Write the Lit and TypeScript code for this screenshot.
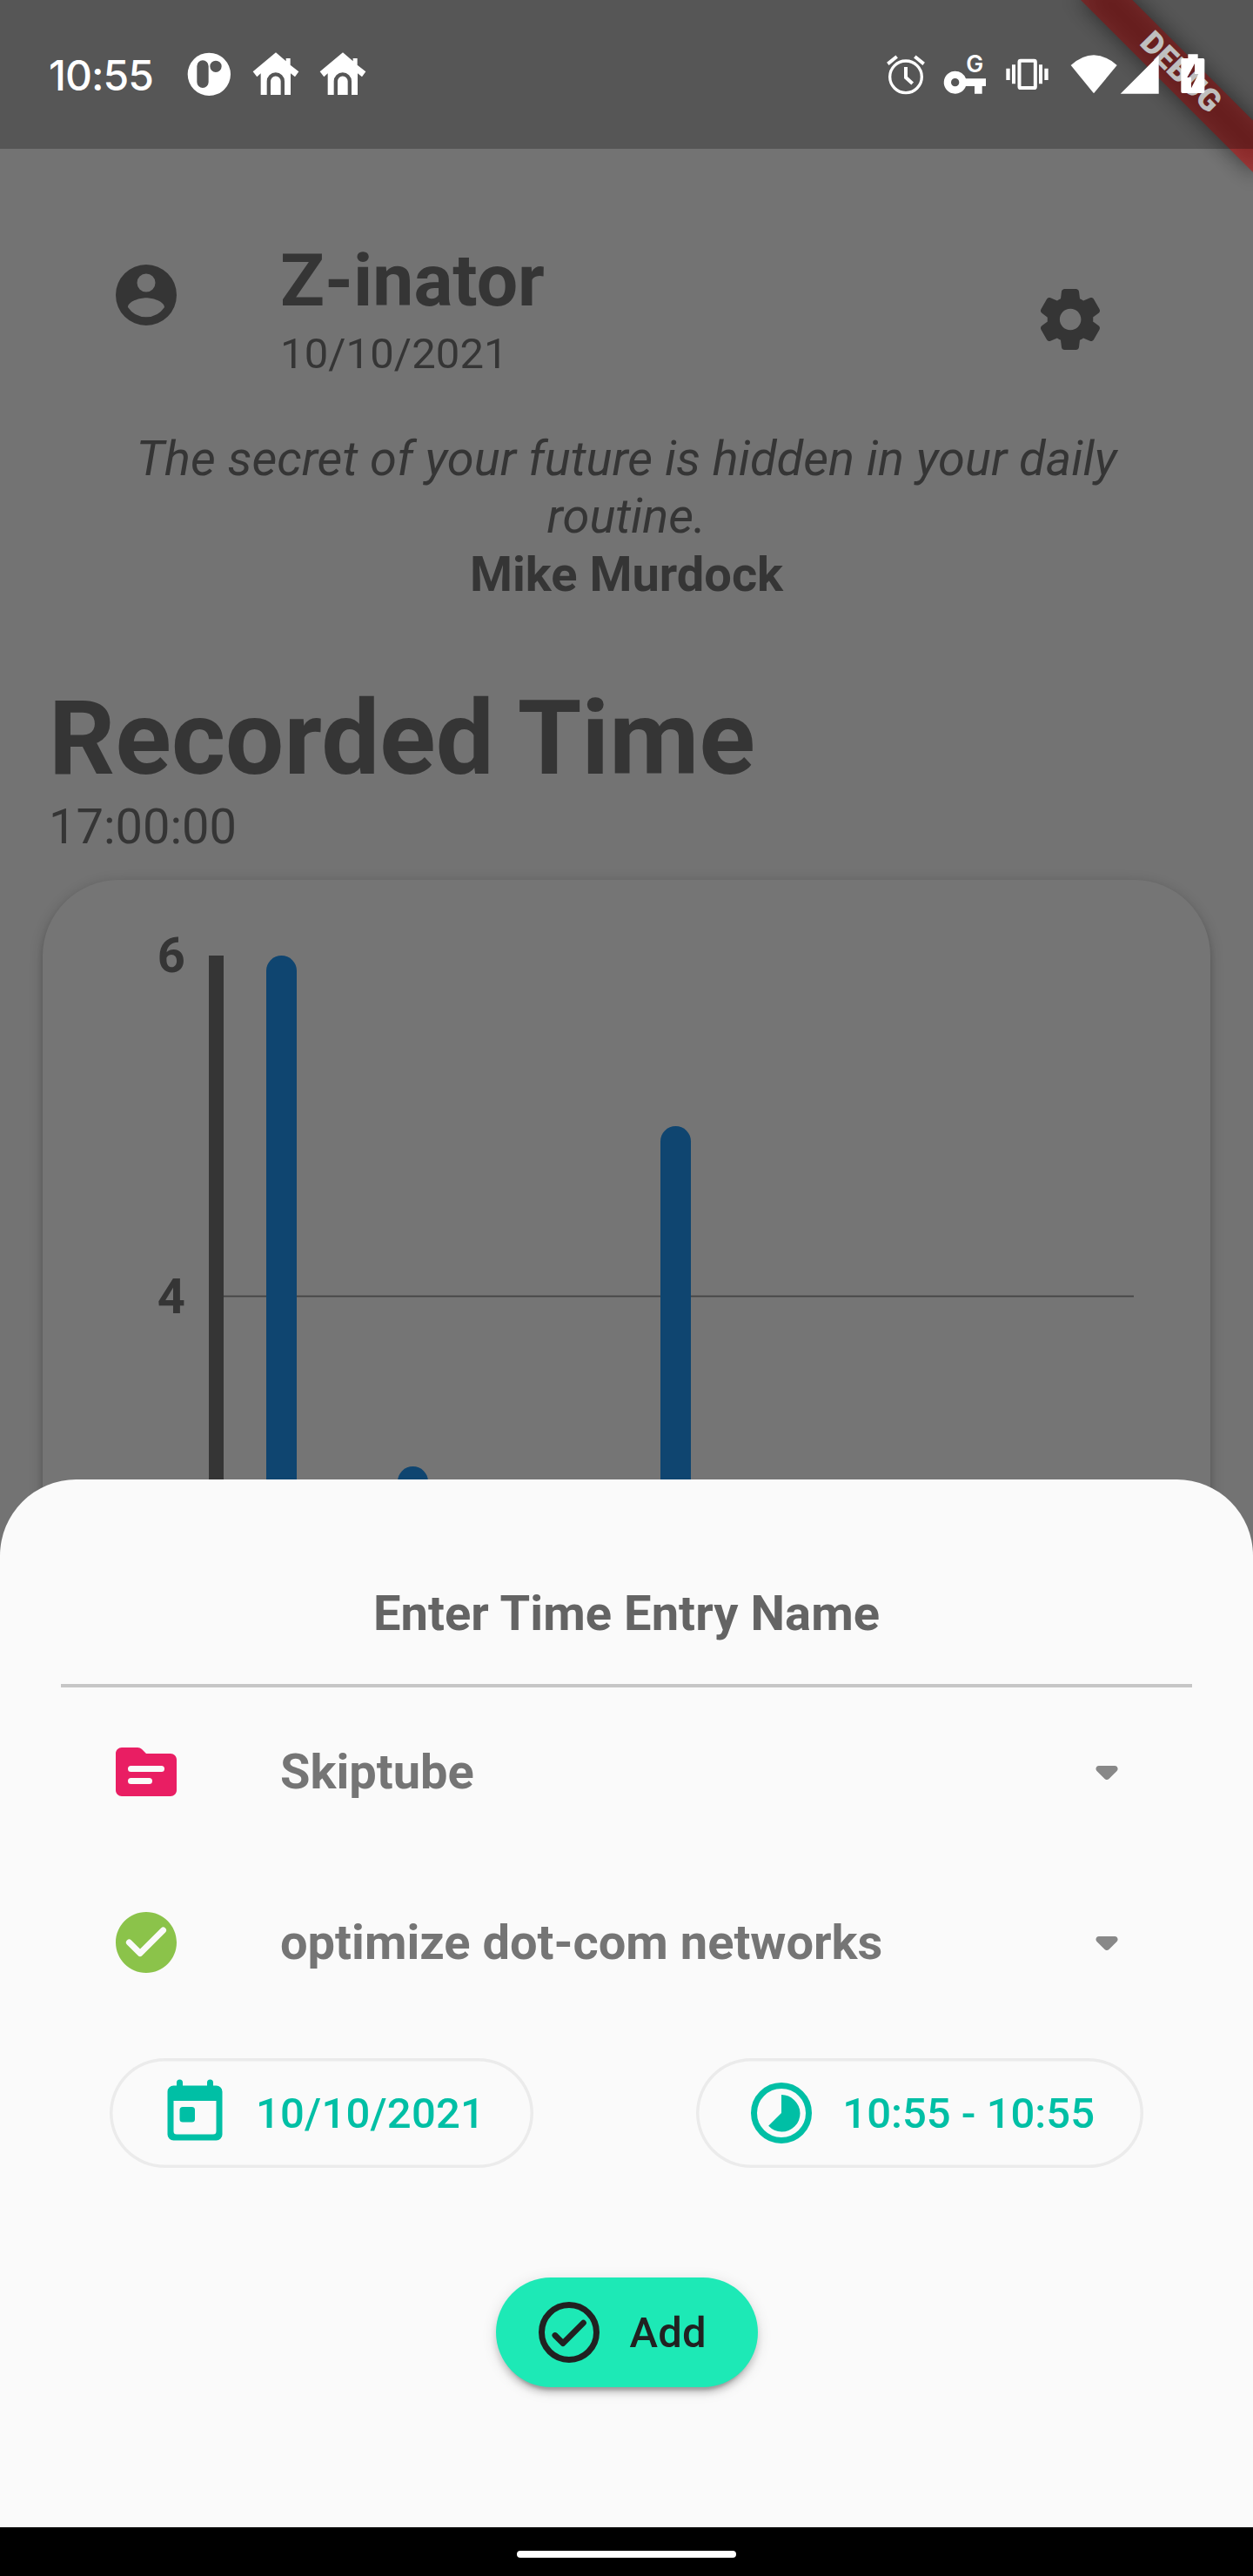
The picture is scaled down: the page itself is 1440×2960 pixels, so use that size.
import { LitElement, html, css, svg } from "lit";
import { customElement, property } from "lit/decorators.js";

const glyphs: Record<string, unknown> = {
  account: svg`<path fill-rule="evenodd" d="M12 2a10 10 0 1 0 0 20 10 10 0 0 0 0-20zm0 3a3 3 0 1 1 0 6 3 3 0 0 1 0-6zm0 14.2a7.2 7.2 0 0 1-6-3.22c.03-1.99 4-3.08 6-3.08s5.970 1.090 6 3.080a7.200 7.200 0 0 1-6 3.220z"/>`,
  settings: svg`<path d="M19.500 12c0-.23-.01-.45-.03-.68l1.860-1.410c.4-.3.510-.86.260-1.300l-1.870-3.230c-.25-.44-.79-.62-1.250-.42l-2.150.91c-.37-.26-.76-.49-1.170-.68l-.29-2.310c-.06-.5-.49-.88-.99-.88h-3.730c-.51 0-.94.380-1 .88l-.29 2.310c-.41.190-.8.420-1.170.68l-2.150-.91c-.46-.2-1-.02-1.250.42L2.410 8.620c-.25.440-.14.990.260 1.300l1.860 1.410c-.02.220-.03.440-.03.670s.01.450.030.680l-1.860 1.410c-.4.300-.51.860-.26 1.300l1.870 3.230c.25.440.79.620 1.250.42l2.150-.91c.37.260.76.490 1.170.68l.29 2.310c.06.500.49.880.99.880h3.730c.500 0 .930-.38.990-.88l.290-2.310c.410-.19.800-.42 1.170-.68l2.150.91c.460.200 1 .020 1.250-.42l1.870-3.230c.250-.44.140-.99-.26-1.300l-1.860-1.410c.030-.23.040-.45.040-.68zm-7.460 3.500c-1.930 0-3.500-1.570-3.500-3.500s1.570-3.500 3.500-3.500 3.500 1.570 3.500 3.500-1.570 3.500-3.500 3.500z"/>`,
  folder: svg`<path fill-rule="evenodd" d="M4 4h5.170c.53 0 1.040.210 1.420.590L12 6h8c1.100 0 2 .9 2 2v10c0 1.100-.9 2-2 2H4c-1.100 0-2-.9-2-2V6c0-1.100.9-2 2-2zm3 10a1 1 0 0 0 0 2h6a1 1 0 0 0 0-2zm0-4a1 1 0 0 0 0 2h10a1 1 0 0 0 0-2z"/>`,
  check: svg`<path d="M12 2C6.480 2 2 6.480 2 12s4.480 10 10 10 10-4.480 10-10S17.520 2 12 2zM9.290 16.290L5.700 12.700a.996.996 0 1 1 1.410-1.410L10 14.170l6.880-6.880a.996.996 0 1 1 1.410 1.410l-7.590 7.590a.996.996 0 0 1-1.410 0z"/>`,
  checkOutline: svg`<circle cx="12" cy="12" r="9" fill="none" stroke="currentColor" stroke-width="2"/><path d="M7.400 13L10 15.600l6.700-6.700" fill="none" stroke="currentColor" stroke-width="1.950" stroke-linecap="round" stroke-linejoin="round"/>`,
  drop: svg`<path d="M8.710 11.710l2.590 2.590c.39.390 1.020.390 1.410 0l2.590-2.590c.63-.63.180-1.710-.71-1.710H9.410c-.89 0-1.330 1.080-.7 1.710z"/>`,
  today: svg`<path fill-rule="evenodd" d="M6 3V2a1 1 0 0 1 2 0v1h8V2a1 1 0 0 1 2 0v1h1a2 2 0 0 1 2 2v14a2 2 0 0 1-2 2H5a2 2 0 0 1-2-2V5a2 2 0 0 1 2-2zM5 8v10a1 1 0 0 0 1 1h12a1 1 0 0 0 1-1V8z"/><rect x="7" y="10" width="5" height="5" rx="1"/>`,
  timelapse: svg`<circle cx="12" cy="12" r="9" fill="none" stroke="currentColor" stroke-width="2"/><path d="M16.240 7.760A6 6 0 0 0 12 6v6l-4.240 4.240a6 6 0 1 0 8.480-8.480z"/>`,
};

@customElement("m-icon")
class MIcon extends LitElement {
  static styles = css`
    :host { display: block; flex: none; width: 84px; height: 84px; }
    svg { display: block; width: 100%; height: 100%; fill: currentColor; }
  `;
  @property() name = "";
  render() {
    return html`<svg viewBox="0 0 24 24">${glyphs[this.name]}</svg>`;
  }
}

@customElement("status-bar")
class StatusBar extends LitElement {
  static styles = css`
    :host { display: flex; align-items: flex-start; box-sizing: border-box; height: 171px; padding: 60px 55px 0 56px; background: rgba(0, 0, 0, 0.25); color: #fff; }
    svg { display: block; flex: none; height: 51px; fill: currentColor; overflow: visible; }
    .time { width: 159px; font: 550 48px/54px Inter, Roboto, sans-serif; letter-spacing: -1px; }
    .left { display: flex; gap: 23px; }
    .right { display: flex; margin-left: auto; }
    .w50 { width: 52px; }
    .w54 { width: 54px; }
    .alarm { width: 46px; margin-right: 20px; }
    .key { width: 50px; margin-right: 21px; }
    .vib { width: 50px; margin-right: 25px; }
    .wifi { width: 54px; margin-right: 3px; }
    .cell { width: 45px; margin-right: 25px; }
    .bat { width: 28px; }
    .line { fill: none; stroke: currentColor; }
    .g { font: 600 80px Inter, Roboto, sans-serif; }
  `;
  private house() {
    return html`<svg class="w54" viewBox="871 180 162 153"><path d="M952 181L987 211V201H1002V224L1031 247L1018 265L1003 253V327H982V280a30.500 30.500 0 0 0-61 0V327H900V253L887 265L873 247ZM934 327V280a17.500 17.500 0 0 1 35 0V327Z"/></svg>`;
  }
  render() {
    return html`
      <div class="time">10:55</div>
      <div class="left">
        <svg class="w50" viewBox="645 180 156 153"><path fill-rule="evenodd" d="M721 182a74 74 0 1 0 0 148a74 74 0 0 0 0-148ZM699 208a20 20 0 0 1 20 20V283a20 20 0 0 1-40 0V228a20 20 0 0 1 20-20ZM744 209a20 20 0 1 1 0 40a20 20 0 0 1 0-40Z"/></svg>
        ${this.house()}${this.house()}
      </div>
      <div class="right">
        <svg class="alarm" viewBox="111 180 138 153"><g class="line"><circle cx="180" cy="265" r="55" stroke-width="10"/><path d="M180 231V267L203 288" stroke-width="12"/><path d="M118 220L149 195M211 195L242 220" stroke-width="12"/></g></svg>
        <svg class="key" viewBox="309 180 150 153"><path fill-rule="evenodd" d="M350 245a39 39 0 1 0 37 52H417V323H443V297H456V271H387A39 39 0 0 0 350 245ZM350 270a14 14 0 1 1 0 28a14 14 0 0 1 0-28Z"/><text class="g" x="388" y="248">G</text></svg>
        <svg class="vib" viewBox="522 180 150 153"><rect class="line" x="571.500" y="209" width="55" height="94" rx="4" stroke-width="12"/><path d="M526 236h13v40h-13zM546 223h12v66h-12zM639 223h12v66h-12zM658 236h13v40h-13z"/></svg>
        <svg class="wifi" viewBox="748 180 162 153"><path d="M750 225Q829 155 909 225L829 322Z"/></svg>
        <svg class="cell" viewBox="921 180 135 153"><path d="M923 323L1055 191V323Z"/></svg>
        <svg class="bat" viewBox="1130 180 84 153"><path fill-rule="evenodd" d="M1155 187H1189V201H1207a5 5 0 0 1 5 5V316a5 5 0 0 1-5 5H1136a5 5 0 0 1-5-5V206a5 5 0 0 1 5-5H1155ZM1178 219L1152 267H1166V304L1191 255H1178Z"/></svg>
      </div>`;
  }
}

const UNIT = 195.75;

@customElement("time-chart")
class TimeChart extends LitElement {
  static styles = css`
    :host { display: block; position: relative; box-sizing: border-box; height: 1400px; border-radius: 87.5px; background: #fff; color: #757575;
      box-shadow: 0 7px 10px -3px rgba(0,0,0,.2), 0 3px 14px rgba(0,0,0,.12), 0 4px 18px rgba(0,0,0,.1); }
    .label { position: absolute; left: 100px; width: 64px; text-align: right; font: 700 56px/66px Roboto, sans-serif; transform: translateY(-50%); }
    .axis { position: absolute; left: 190.500px; top: 87px; bottom: 100px; width: 17.500px; background: #757575; }
    .grid { position: absolute; left: 199px; right: 88px; height: 1px; background: #959595; border: solid #d4d4d4; border-width: 1px 0; }
    .bar { position: absolute; bottom: 100px; width: 35px; border-radius: 17.500px; background: #2196f3; }
  `;
  render() {
    const y = (v: number) => 87 + (6 - v) * UNIT;
    const bars = [[0, 6], [1, 3], [3, 5]];
    return html`
      <div class="grid" style="top:${y(4) - 1.500}px"></div>
      <div class="axis"></div>
      ${[6, 4].map((v) => html`<div class="label" style="top:${y(v)}px">${v}</div>`)}
      ${bars.map(([i, v]) => html`<div class="bar" style="left:${257.200 + i * 150.800}px;top:${y(v)}px"></div>`)}`;
  }
}

@customElement("app-root")
class AppRoot extends LitElement {
  static styles = css`
    :host { display: block; position: relative; width: 1440px; height: 2960px; overflow: hidden; background: #fafafa; font-family: Roboto, sans-serif; color: #757575; }
    .page { height: 2960px; overflow: hidden; box-sizing: border-box; padding-top: 274px; }
    .head { display: flex; align-items: flex-start; height: 220px; padding: 0 168px 0 126px; }
    .avatar { margin: 23px 112px 0 0; }
    .gear { margin: 51px 0 0 auto; }
    .name { font: 700 84px/98px Roboto, sans-serif; }
    .date { margin-top: 6px; font: 400 49px/57px Roboto, sans-serif; letter-spacing: 0.1px; }
    .quote { height: 285px; padding: 0 105px; text-align: center; font-size: 56px; line-height: 66px; }
    .quote i { display: block; }
    .quote b { display: block; margin-top: 1px; }
    .sum { padding: 0 56px; height: 232px; }
    .sum-title { font: 700 119px/139px Roboto, sans-serif; letter-spacing: 0.2px; }
    .sum-value { margin-top: -1px; font: 400 56px/66px Roboto, sans-serif; }
    .card { margin: 0 49px; }
    .scrim { position: absolute; inset: 0; background: rgba(0, 0, 0, 0.54); }
    .sheet { position: absolute; left: 0; right: 0; top: 1700px; bottom: 56px; box-sizing: border-box; padding-top: 121px; border-radius: 87.500px 87.500px 0 0; background: #fafafa; }
    .title { box-sizing: border-box; height: 118px; margin: 0 70px -1px; border-bottom: 4px solid #c6c6c6; text-align: center; font: 700 56px/66px Roboto, sans-serif; letter-spacing: 0.08px; color: #646464; }
    .row { display: flex; align-items: center; height: 196px; padding: 0 126px; font: 700 56px/66px Roboto, sans-serif; color: #757575; }
    .row-text { margin-left: 112px; flex: 1; }
    .pink { color: #e91e63; }
    .green { color: #8bc34a; }
    .arrow { color: #888; }
    .chips { display: flex; justify-content: space-between; padding: 35px 126px 0; }
    .chip { display: flex; align-items: center; gap: 28px; box-sizing: border-box; height: 126px; padding: 0 56px; box-shadow: inset 0 0 0 3.500px #ebebeb; border-radius: 63px; color: #00bfa5; font: 500 49px/57px Roboto, sans-serif; }
    .chip-date { letter-spacing: 0.200px; }
    .add { display: flex; align-items: center; gap: 28px; box-sizing: border-box; width: 301px; height: 126px; margin: 126px auto 0; padding: 0 42px; border-radius: 63px; background: #1de9b6; color: #212121; font: 500 49px/57px Roboto, sans-serif; letter-spacing: 0.200px;
      box-shadow: 0 10.500px 3.500px -7px rgba(0,0,0,.2), 0 7px 7px rgba(0,0,0,.14), 0 3.500px 17.500px rgba(0,0,0,.12); }
    .nav { position: absolute; left: 0; right: 0; bottom: 0; box-sizing: border-box; height: 56px; padding-top: 6px; display: flex; align-items: center; justify-content: center; background: #000; }
    .pill { width: 252px; height: 8px; border-radius: 4px; background: #fff; }
    .banner { position: absolute; left: 1300px; top: 0; width: 280px; height: 140px; transform-origin: 140px 0; transform: rotate(45deg); }
    .shade { position: absolute; left: 0; right: 0; top: 98px; height: 42px; background: rgba(0, 0, 0, 0.5); filter: blur(12.600px); }
    .ribbon { position: absolute; left: 0; right: 0; top: 98px; box-sizing: border-box; height: 42px; background: rgba(183, 28, 28, 0.627); text-align: center; font: 900 35.700px/38px Roboto, sans-serif; color: #fff; }
    .status { position: absolute; left: 0; right: 0; top: 0; }
  `;
  render() {
    return html`
      <div class="page">
        <div class="head">
          <m-icon class="avatar" name="account"></m-icon>
          <div><div class="name">Z-inator</div><div class="date">10/10/2021</div></div>
          <m-icon class="gear" name="settings"></m-icon>
        </div>
        <div class="quote"><i>The secret of your future is hidden in your daily routine.</i><b>Mike Murdock</b></div>
        <div class="sum"><div class="sum-title">Recorded Time</div><div class="sum-value">17:00:00</div></div>
        <time-chart class="card"></time-chart>
      </div>
      <div class="scrim"></div>
      <div class="sheet">
        <div class="title">Enter Time Entry Name</div>
        <div class="row"><m-icon class="pink" name="folder"></m-icon><span class="row-text">Skiptube</span><m-icon class="arrow" name="drop"></m-icon></div>
        <div class="row"><m-icon class="green" name="check"></m-icon><span class="row-text">optimize dot-com networks</span><m-icon class="arrow" name="drop"></m-icon></div>
        <div class="chips">
          <div class="chip chip-date"><m-icon name="today"></m-icon>10/10/2021</div>
          <div class="chip"><m-icon name="timelapse"></m-icon>10:55 - 10:55</div>
        </div>
        <div class="add"><m-icon name="checkOutline"></m-icon>Add</div>
      </div>
      <div class="nav"><div class="pill"></div></div>
      <div class="banner"><div class="shade"></div><div class="ribbon">DEBUG</div></div>
      <status-bar class="status"></status-bar>`;
  }
}
